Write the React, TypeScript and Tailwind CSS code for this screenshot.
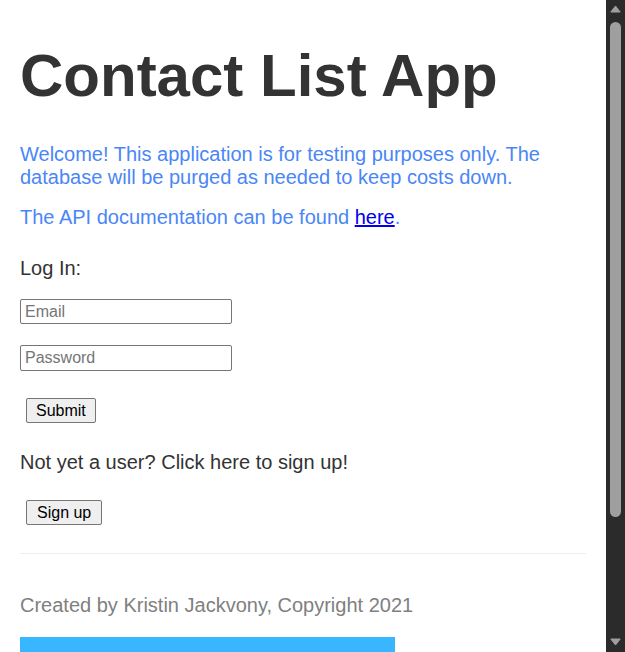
import React from "react";

function ScrollBar() {
  return (
    <div className="w-[19px] shrink-0 h-full bg-[#2b2b2b] flex flex-col items-center">
      <svg width="11" height="8" viewBox="0 0 11 8" className="mt-[5px]">
        <path d="M5.5 1 L10.2 7 L0.8 7 Z" fill="#9f9f9f" stroke="#9f9f9f" strokeWidth="1" strokeLinejoin="round" />
      </svg>
      <div className="mt-[9px] w-[11px] h-[495px] rounded-full bg-[#9f9f9f]" />
      <div className="flex-1" />
      <svg width="11" height="8" viewBox="0 0 11 8" className="mb-[6px]">
        <path d="M0.8 1 L10.2 1 L5.5 7 Z" fill="#9f9f9f" stroke="#9f9f9f" strokeWidth="1" strokeLinejoin="round" />
      </svg>
    </div>
  );
}

export default function App() {
  return (
    <div className="flex h-screen overflow-hidden bg-white">
      <div className="flex-1 min-w-0 overflow-hidden">
        <div className="px-5 pb-[13px] font-['Liberation_Sans',Arial,sans-serif]">
          <h1 className="mt-[41px] text-[60px] leading-[1.15] font-bold text-[#333333]">
            Contact List App
          </h1>
          <p className="mt-[33px] text-[20px] leading-[23px] text-[#4a86f7]">
            Welcome! This application is for testing purposes only. The database
            will be purged as needed to keep costs down.
          </p>
          <p className="mt-[17px] text-[20px] leading-[23px] text-[#4a86f7]">
            The API documentation can be found{" "}
            <a href="#" className="text-[#0000ee] underline">
              here
            </a>
            .
          </p>
          <p className="mt-[28px] text-[20px] leading-[23px] text-[#333333]">Log In:</p>
          <div className="mt-[19px]">
            <input
              type="text"
              placeholder="Email"
              className="block w-[212px] h-[25px] border border-[#767676] rounded-[2px] px-[4px] text-[16px] text-black placeholder:text-[#757575] bg-white"
            />
          </div>
          <div className="mt-[21px]">
            <input
              type="password"
              placeholder="Password"
              className="block w-[212px] h-[26px] border border-[#767676] rounded-[2px] px-[4px] text-[16px] text-black placeholder:text-[#757575] bg-white"
            />
          </div>
          <div className="mt-[27px]">
            <button className="ml-[6px] h-[25px] px-[9px] border border-[#767676] rounded-[2px] bg-[#efefef] text-[16px] text-black leading-none">
              Submit
            </button>
          </div>
          <p className="mt-[28px] text-[20px] leading-[23px] text-[#333333]">
            Not yet a user? Click here to sign up!
          </p>
          <div className="mt-[26px]">
            <button className="ml-[6px] h-[25px] px-[10px] border border-[#767676] rounded-[2px] bg-[#efefef] text-[16px] text-black leading-none">
              Sign up
            </button>
          </div>
          <hr className="mt-[28px] border-0 border-t border-[#eeeeee]" />
          <p className="mt-[40px] text-[20px] leading-[23px] text-[#808080]">
            Created by Kristin Jackvony, Copyright 2021
          </p>
          <div className="mt-[20px] w-[375px] h-[150px] bg-[#38b6ff]" />
        </div>
      </div>
      <ScrollBar />
    </div>
  );
}
